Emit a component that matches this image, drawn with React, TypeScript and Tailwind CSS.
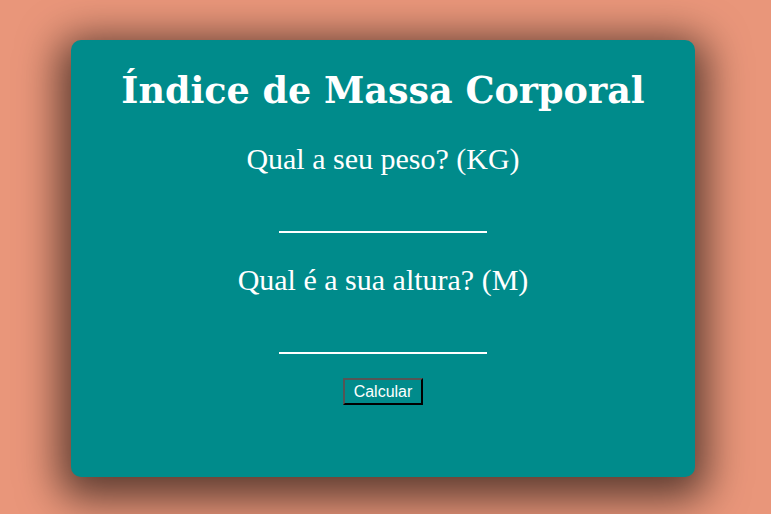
import React from "react";

export default function App() {
  return (
    <div className="w-[771px] h-[514px] bg-[#E9967A] pt-[40px] pl-[71px] overflow-hidden">
      <div className="w-[624px] h-[437px] bg-[#008B8B] rounded-[10px] shadow-[0_10px_40px_12px_rgba(0,0,0,0.6)] flex flex-col items-center text-white">
        <h1
          className="mt-[27px] text-[36.5px] leading-[48px] font-bold"
          style={{ fontFamily: "Georgia, 'DejaVu Serif', 'Liberation Serif', serif" }}
        >
          Índice de Massa Corporal
        </h1>
        <p
          className="mt-[28px] text-[30px] leading-[32px]"
          style={{ fontFamily: "'Liberation Serif', serif" }}
        >
          Qual a seu peso? (KG)
        </p>
        <input
          type="text"
          className="mt-[26px] w-[208px] h-[32px] bg-transparent border-0 border-b-2 border-white outline-none"
        />
        <p
          className="mt-[31px] text-[30px] leading-[32px]"
          style={{ fontFamily: "'Liberation Serif', serif" }}
        >
          Qual é a sua altura? (M)
        </p>
        <input
          type="text"
          className="mt-[26px] w-[208px] h-[32px] bg-transparent border-0 border-b-2 border-white outline-none"
        />
        <button
          className="mt-[24px] w-[80px] h-[27px] border-2 border-t-[#555] border-l-[#555] border-b-black border-r-black text-white text-[16px] leading-none"
          style={{ fontFamily: "'Liberation Sans', Arial, sans-serif" }}
        >
          Calcular
        </button>
      </div>
    </div>
  );
}
